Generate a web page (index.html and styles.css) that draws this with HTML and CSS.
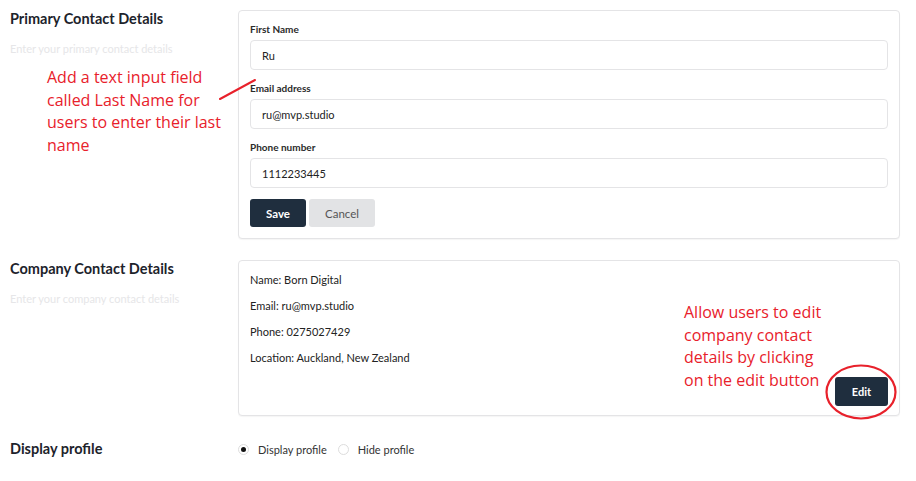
FILE: index.html
```html
<!DOCTYPE html>
<html>
<head>
<meta charset="utf-8">
<link rel="stylesheet" href="styles.css">
</head>
<body>
<div class="page">
  <section class="row row-primary">
    <div class="side">
      <h2 class="title">Primary Contact Details</h2>
      <p class="sub">Enter your primary contact details</p>
      <p class="note note-left">Add a text input field called Last Name for users to enter their last name</p>
      <svg class="pointer" width="40" height="24" viewBox="0 0 40 24"><line x1="2" y1="21" x2="37" y2="2" stroke="#e8212b" stroke-width="2" stroke-linecap="round"/></svg>
    </div>
    <div class="card form-card">
      <label class="lbl">First Name</label>
      <div class="input">Ru</div>
      <label class="lbl">Email address</label>
      <div class="input">ru@mvp.studio</div>
      <label class="lbl">Phone number</label>
      <div class="input">1112233445</div>
      <div class="btns">
        <button class="btn btn-dark">Save</button>
        <button class="btn btn-light">Cancel</button>
      </div>
    </div>
  </section>

  <section class="row row-company">
    <div class="side">
      <h2 class="title">Company Contact Details</h2>
      <p class="sub">Enter your company contact details</p>
    </div>
    <div class="card info-card">
      <div class="info">
        <p>Name: Born Digital</p>
        <p>Email: ru@mvp.studio</p>
        <p>Phone: 0275027429</p>
        <p>Location: Auckland, New Zealand</p>
      </div>
      <p class="note note-right">Allow users to edit company contact details by clicking on the edit button</p>
      <div class="edit-wrap">
        <button class="btn btn-dark btn-edit">Edit</button>
        <svg class="ring" width="74" height="58" viewBox="0 0 74 58"><ellipse cx="37" cy="29" rx="34.5" ry="26.5" fill="none" stroke="#e8212b" stroke-width="2.2"/></svg>
      </div>
    </div>
  </section>

  <section class="row row-display">
    <div class="side">
      <h2 class="title">Display profile</h2>
    </div>
    <div class="radios">
      <span class="radio on"></span><span class="rlabel">Display profile</span>
      <span class="radio"></span><span class="rlabel">Hide profile</span>
    </div>
  </section>
</div>
</body>
</html>
```

FILE: styles.css
```css
* { box-sizing: border-box; }
html, body { margin: 0; padding: 0; background: #fff; }
body { font-family: Lato, "Noto Sans", sans-serif; color: #222; width: 916px; height: 481px; overflow: hidden; }
.page { padding: 10px 16px 0 10px; display: flex; flex-direction: column; }
.row { display: flex; }
.side { width: 228px; flex: none; position: relative; }
.title { margin: 0; font-size: 14.5px; font-weight: 700; color: #1d232b; line-height: 17px; }
.sub { margin: 15px 0 0; font-size: 11px; color: #e6e6e8; line-height: 14px; }
.note { margin: 0; font-family: "Open Sans", "Noto Sans", sans-serif; font-size: 16px; line-height: 22.7px; color: #e8212b; }
.note-left { margin: 10px 0 0 37px; width: 180px; }
.pointer { position: absolute; left: 208px; top: 68px; z-index: 2; }
.card { flex: 1; border: 1px solid #e4e4e6; border-radius: 4px; background: #fff; box-shadow: 0 1px 1px rgba(0,0,0,0.04); }
.form-card { padding: 12px 11px 10px; display: flex; flex-direction: column; height: 229px; }
.lbl { font-size: 10px; font-weight: 700; color: #2b2b2b; line-height: 12px; display: block; margin-bottom: 5px; }
.input { height: 30px; border: 1px solid #e4e4e6; border-radius: 4px; padding: 0 11px; display: flex; align-items: center; font-size: 11px; color: #222; margin-bottom: 12px; }
.btns { display: flex; gap: 3px; margin-top: -1px; }
.btn { font-family: Lato, "Noto Sans", sans-serif; border: none; border-radius: 3px; height: 28px; font-size: 11.5px; padding: 0; cursor: pointer; }
.btn-dark { background: #1f2e3e; color: #fff; font-weight: 700; width: 56px; }
.btn-light { background: #e2e3e5; color: #555; width: 66px; }
.row-company { margin-top: 21px; }
.info-card { height: 156px; padding: 12px 11px; position: relative; display: flex; }
.info p { margin: 0 0 12px; font-size: 11px; line-height: 14px; color: #222; }
.note-right { position: absolute; left: 445px; top: 40px; width: 150px; }
.edit-wrap { position: absolute; left: 596px; top: 116px; width: 53px; height: 29px; }
.btn-edit { width: 53px; height: 29px; font-size: 11px; }
.ring { position: absolute; left: -11px; top: -14px; pointer-events: none; }
.row-display { margin-top: 24px; align-items: center; }
.radios { display: flex; align-items: center; font-size: 11px; color: #333; margin-top: 2px; }
.radio { width: 11px; height: 11px; border: 1px solid #ddd; border-radius: 50%; display: inline-flex; align-items: center; justify-content: center; margin-right: 9px; }
.radio.on::after { content: ""; width: 5px; height: 5px; background: #111; border-radius: 50%; }
.rlabel { margin-right: 11px; }
```
